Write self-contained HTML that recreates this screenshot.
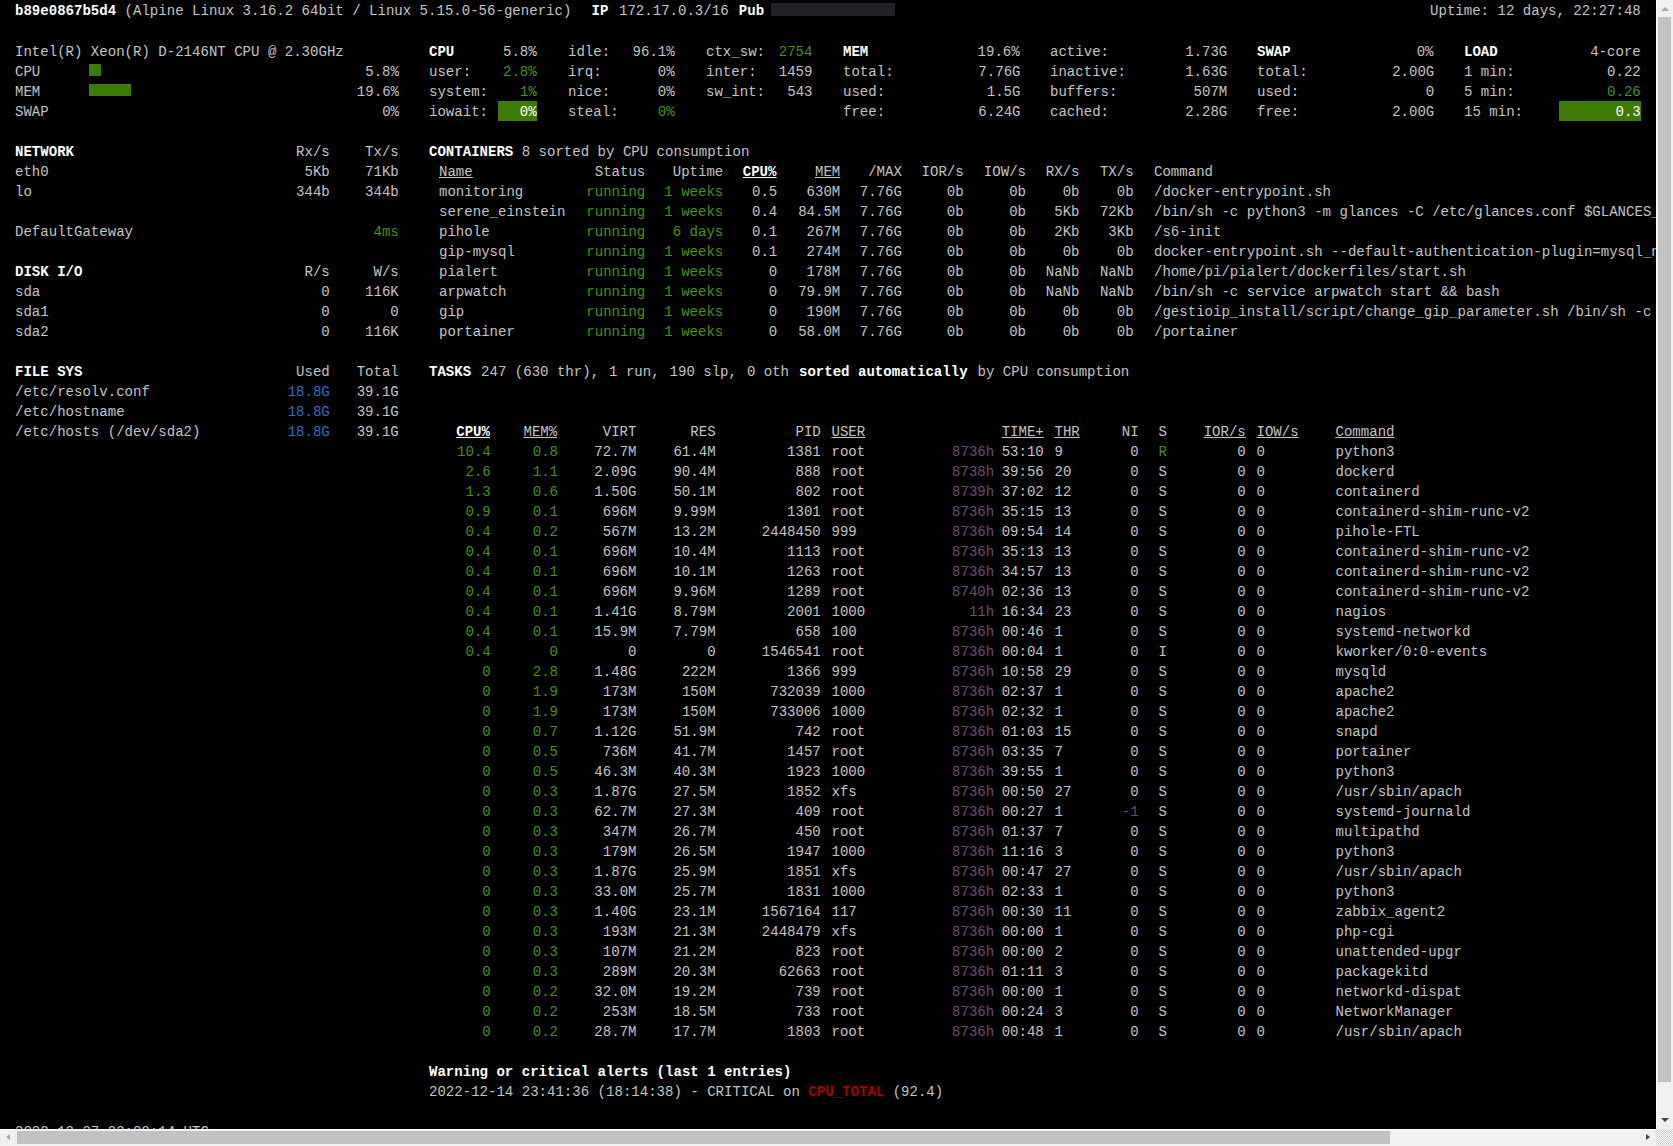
<!DOCTYPE html>
<html><head><meta charset="utf-8"><title>Glances</title>
<style>
html,body{margin:0;padding:0;}
body{width:1673px;height:1146px;overflow:hidden;background:#000;position:relative;}
#scr{position:absolute;left:0;top:0;width:1656px;height:1129px;overflow:hidden;background:#000;}
.t{position:absolute;white-space:pre;font-family:"Liberation Mono",monospace;font-size:14.05px;line-height:20px;color:#c4c4c4;z-index:1;}
.b{position:absolute;z-index:0;}
.ti{font-weight:bold;color:#fff;}
.ok{color:#47900a;}
.okl{color:#fff;}
.car{color:#2b6fc0;}
.hl{color:#6a4c70;}
.crit{color:#A30000;font-weight:bold;}
.u{text-decoration:underline;}
.vs{position:absolute;left:1656px;top:0;width:17px;height:1129px;background:#f0f0f0;border-left:1px solid #fff;box-sizing:border-box;}
.hs{position:absolute;left:0;top:1129px;width:1656px;height:17px;background:#f0f0f0;border-top:1px solid #fff;box-sizing:border-box;}
.corner{position:absolute;left:1656px;top:1129px;width:17px;height:17px;background:repeating-conic-gradient(#fafafa 0 25%, #cfcfcf 0 50%) 0 0/2px 2px;}
.ar{position:absolute;width:0;height:0;}
</style></head><body>
<div id="scr">
<div class="t " style="left:15.00px;top:1.30px"><span class="ti">b89e0867b5d4</span> (Alpine Linux 3.16.2 64bit / Linux 5.15.0-56-generic)</div>
<div class="t ti" style="left:591.50px;top:1.30px">IP</div>
<div class="t " style="left:619.00px;top:1.30px">172.17.0.3/16</div>
<div class="t ti" style="left:738.80px;top:1.30px">Pub</div>
<div class="b" style="left:771px;top:3px;width:124px;height:13px;background:#222226"></div>
<div class="t " style="left:1430.05px;top:1.30px">Uptime: 12 days, 22:27:48</div>
<div class="t " style="left:15.00px;top:42.30px">Intel(R) Xeon(R) D-2146NT CPU @ 2.30GHz</div>
<div class="t " style="left:15.00px;top:62.30px">CPU</div>
<div class="t " style="left:15.00px;top:82.30px">MEM</div>
<div class="t " style="left:15.00px;top:102.30px">SWAP</div>
<div class="b" style="left:89px;top:64px;width:12px;height:12px;background:#3E7B04"></div>
<div class="b" style="left:89px;top:84px;width:42px;height:12px;background:#3E7B04"></div>
<div class="t " style="left:365.28px;top:62.30px">5.8%</div>
<div class="t " style="left:356.85px;top:82.30px">19.6%</div>
<div class="t " style="left:382.14px;top:102.30px">0%</div>
<div class="t ti" style="left:429.00px;top:42.30px">CPU</div>
<div class="t " style="left:502.98px;top:42.30px">5.8%</div>
<div class="t " style="left:429.00px;top:62.30px">user:</div>
<div class="t ok" style="left:502.98px;top:62.30px">2.8%</div>
<div class="t " style="left:429.00px;top:82.30px">system:</div>
<div class="t ok" style="left:519.84px;top:82.30px">1%</div>
<div class="t " style="left:429.00px;top:102.30px">iowait:</div>
<div class="t okl" style="left:519.84px;top:102.30px">0%</div>
<div class="b" style="left:498px;top:101px;width:39px;height:20px;background:#3E7B04"></div>
<div class="t " style="left:568.00px;top:42.30px">idle:</div>
<div class="t " style="left:632.55px;top:42.30px">96.1%</div>
<div class="t " style="left:568.00px;top:62.30px">irq:</div>
<div class="t " style="left:657.84px;top:62.30px">0%</div>
<div class="t " style="left:568.00px;top:82.30px">nice:</div>
<div class="t " style="left:657.84px;top:82.30px">0%</div>
<div class="t " style="left:568.00px;top:102.30px">steal:</div>
<div class="t ok" style="left:657.84px;top:102.30px">0%</div>
<div class="t " style="left:706.00px;top:42.30px">ctx_sw:</div>
<div class="t ok" style="left:778.78px;top:42.30px">2754</div>
<div class="t " style="left:706.00px;top:62.30px">inter:</div>
<div class="t " style="left:778.78px;top:62.30px">1459</div>
<div class="t " style="left:706.00px;top:82.30px">sw_int:</div>
<div class="t " style="left:787.21px;top:82.30px">543</div>
<div class="t ti" style="left:843.00px;top:42.30px">MEM</div>
<div class="t " style="left:977.55px;top:42.30px">19.6%</div>
<div class="t " style="left:843.00px;top:62.30px">total:</div>
<div class="t " style="left:978.35px;top:62.30px">7.76G</div>
<div class="t " style="left:843.00px;top:82.30px">used:</div>
<div class="t " style="left:986.78px;top:82.30px">1.5G</div>
<div class="t " style="left:843.00px;top:102.30px">free:</div>
<div class="t " style="left:978.35px;top:102.30px">6.24G</div>
<div class="t " style="left:1050.00px;top:42.30px">active:</div>
<div class="t " style="left:1185.15px;top:42.30px">1.73G</div>
<div class="t " style="left:1050.00px;top:62.30px">inactive:</div>
<div class="t " style="left:1185.15px;top:62.30px">1.63G</div>
<div class="t " style="left:1050.00px;top:82.30px">buffers:</div>
<div class="t " style="left:1193.58px;top:82.30px">507M</div>
<div class="t " style="left:1050.00px;top:102.30px">cached:</div>
<div class="t " style="left:1185.15px;top:102.30px">2.28G</div>
<div class="t ti" style="left:1257.00px;top:42.30px">SWAP</div>
<div class="t " style="left:1416.64px;top:42.30px">0%</div>
<div class="t " style="left:1257.00px;top:62.30px">total:</div>
<div class="t " style="left:1392.15px;top:62.30px">2.00G</div>
<div class="t " style="left:1257.00px;top:82.30px">used:</div>
<div class="t " style="left:1425.87px;top:82.30px">0</div>
<div class="t " style="left:1257.00px;top:102.30px">free:</div>
<div class="t " style="left:1392.15px;top:102.30px">2.00G</div>
<div class="t ti" style="left:1464.00px;top:42.30px">LOAD</div>
<div class="t " style="left:1590.22px;top:42.30px">4-core</div>
<div class="t " style="left:1464.00px;top:62.30px">1 min:</div>
<div class="t " style="left:1607.08px;top:62.30px">0.22</div>
<div class="t " style="left:1464.00px;top:82.30px">5 min:</div>
<div class="t ok" style="left:1607.08px;top:82.30px">0.26</div>
<div class="t " style="left:1464.00px;top:102.30px">15 min:</div>
<div class="t okl" style="left:1615.51px;top:102.30px">0.3</div>
<div class="b" style="left:1559px;top:101px;width:82px;height:20px;background:#3E7B04"></div>
<div class="t ti" style="left:15.00px;top:142.30px">NETWORK</div>
<div class="t " style="left:296.08px;top:142.30px">Rx/s</div>
<div class="t " style="left:365.08px;top:142.30px">Tx/s</div>
<div class="t " style="left:15.00px;top:162.30px">eth0</div>
<div class="t " style="left:304.51px;top:162.30px">5Kb</div>
<div class="t " style="left:365.08px;top:162.30px">71Kb</div>
<div class="t " style="left:15.00px;top:182.30px">lo</div>
<div class="t " style="left:296.08px;top:182.30px">344b</div>
<div class="t " style="left:365.08px;top:182.30px">344b</div>
<div class="t " style="left:15.00px;top:222.30px">DefaultGateway</div>
<div class="t ok" style="left:373.51px;top:222.30px">4ms</div>
<div class="t ti" style="left:15.00px;top:262.30px">DISK I/O</div>
<div class="t " style="left:304.51px;top:262.30px">R/s</div>
<div class="t " style="left:373.51px;top:262.30px">W/s</div>
<div class="t " style="left:15.00px;top:282.30px">sda</div>
<div class="t " style="left:321.37px;top:282.30px">0</div>
<div class="t " style="left:365.08px;top:282.30px">116K</div>
<div class="t " style="left:15.00px;top:302.30px">sda1</div>
<div class="t " style="left:321.37px;top:302.30px">0</div>
<div class="t " style="left:390.37px;top:302.30px">0</div>
<div class="t " style="left:15.00px;top:322.30px">sda2</div>
<div class="t " style="left:321.37px;top:322.30px">0</div>
<div class="t " style="left:365.08px;top:322.30px">116K</div>
<div class="t ti" style="left:15.00px;top:362.30px">FILE SYS</div>
<div class="t " style="left:296.08px;top:362.30px">Used</div>
<div class="t " style="left:356.65px;top:362.30px">Total</div>
<div class="t " style="left:15.00px;top:382.30px">/etc/resolv.conf</div>
<div class="t car" style="left:287.65px;top:382.30px">18.8G</div>
<div class="t " style="left:356.65px;top:382.30px">39.1G</div>
<div class="t " style="left:15.00px;top:402.30px">/etc/hostname</div>
<div class="t car" style="left:287.65px;top:402.30px">18.8G</div>
<div class="t " style="left:356.65px;top:402.30px">39.1G</div>
<div class="t " style="left:15.00px;top:422.30px">/etc/hosts (/dev/sda2)</div>
<div class="t car" style="left:287.65px;top:422.30px">18.8G</div>
<div class="t " style="left:356.65px;top:422.30px">39.1G</div>
<div class="t " style="left:429.00px;top:142.30px"><span class="ti">CONTAINERS</span> 8 sorted by CPU consumption</div>
<div class="t u" style="left:439.00px;top:162.30px">Name</div>
<div class="t " style="left:594.72px;top:162.30px">Status</div>
<div class="t " style="left:672.72px;top:162.30px">Uptime</div>
<div class="t ti u" style="left:742.78px;top:162.30px">CPU%</div>
<div class="t u" style="left:815.01px;top:162.30px">MEM</div>
<div class="t " style="left:868.18px;top:162.30px">/MAX</div>
<div class="t " style="left:921.55px;top:162.30px">IOR/s</div>
<div class="t " style="left:983.85px;top:162.30px">IOW/s</div>
<div class="t " style="left:1045.78px;top:162.30px">RX/s</div>
<div class="t " style="left:1099.88px;top:162.30px">TX/s</div>
<div class="t " style="left:1154.00px;top:162.30px">Command</div>
<div class="t " style="left:439.00px;top:182.30px">monitoring</div>
<div class="t ok" style="left:586.29px;top:182.30px">running</div>
<div class="t ok" style="left:664.29px;top:182.30px">1 weeks</div>
<div class="t " style="left:752.01px;top:182.30px">0.5</div>
<div class="t " style="left:806.58px;top:182.30px">630M</div>
<div class="t " style="left:859.75px;top:182.30px">7.76G</div>
<div class="t " style="left:946.84px;top:182.30px">0b</div>
<div class="t " style="left:1009.14px;top:182.30px">0b</div>
<div class="t " style="left:1062.64px;top:182.30px">0b</div>
<div class="t " style="left:1116.74px;top:182.30px">0b</div>
<div class="t " style="left:1154.00px;top:182.30px">/docker-entrypoint.sh</div>
<div class="t " style="left:439.00px;top:202.30px">serene_einstein</div>
<div class="t ok" style="left:586.29px;top:202.30px">running</div>
<div class="t ok" style="left:664.29px;top:202.30px">1 weeks</div>
<div class="t " style="left:752.01px;top:202.30px">0.4</div>
<div class="t " style="left:798.15px;top:202.30px">84.5M</div>
<div class="t " style="left:859.75px;top:202.30px">7.76G</div>
<div class="t " style="left:946.84px;top:202.30px">0b</div>
<div class="t " style="left:1009.14px;top:202.30px">0b</div>
<div class="t " style="left:1054.21px;top:202.30px">5Kb</div>
<div class="t " style="left:1099.88px;top:202.30px">72Kb</div>
<div class="t " style="left:1154.00px;top:202.30px">/bin/sh -c python3 -m glances -C /etc/glances.conf $GLANCES_OPT</div>
<div class="t " style="left:439.00px;top:222.30px">pihole</div>
<div class="t ok" style="left:586.29px;top:222.30px">running</div>
<div class="t ok" style="left:672.72px;top:222.30px">6 days</div>
<div class="t " style="left:752.01px;top:222.30px">0.1</div>
<div class="t " style="left:806.58px;top:222.30px">267M</div>
<div class="t " style="left:859.75px;top:222.30px">7.76G</div>
<div class="t " style="left:946.84px;top:222.30px">0b</div>
<div class="t " style="left:1009.14px;top:222.30px">0b</div>
<div class="t " style="left:1054.21px;top:222.30px">2Kb</div>
<div class="t " style="left:1108.31px;top:222.30px">3Kb</div>
<div class="t " style="left:1154.00px;top:222.30px">/s6-init</div>
<div class="t " style="left:439.00px;top:242.30px">gip-mysql</div>
<div class="t ok" style="left:586.29px;top:242.30px">running</div>
<div class="t ok" style="left:664.29px;top:242.30px">1 weeks</div>
<div class="t " style="left:752.01px;top:242.30px">0.1</div>
<div class="t " style="left:806.58px;top:242.30px">274M</div>
<div class="t " style="left:859.75px;top:242.30px">7.76G</div>
<div class="t " style="left:946.84px;top:242.30px">0b</div>
<div class="t " style="left:1009.14px;top:242.30px">0b</div>
<div class="t " style="left:1062.64px;top:242.30px">0b</div>
<div class="t " style="left:1116.74px;top:242.30px">0b</div>
<div class="t " style="left:1154.00px;top:242.30px">docker-entrypoint.sh --default-authentication-plugin=mysql_native_password</div>
<div class="t " style="left:439.00px;top:262.30px">pialert</div>
<div class="t ok" style="left:586.29px;top:262.30px">running</div>
<div class="t ok" style="left:664.29px;top:262.30px">1 weeks</div>
<div class="t " style="left:768.87px;top:262.30px">0</div>
<div class="t " style="left:806.58px;top:262.30px">178M</div>
<div class="t " style="left:859.75px;top:262.30px">7.76G</div>
<div class="t " style="left:946.84px;top:262.30px">0b</div>
<div class="t " style="left:1009.14px;top:262.30px">0b</div>
<div class="t " style="left:1045.78px;top:262.30px">NaNb</div>
<div class="t " style="left:1099.88px;top:262.30px">NaNb</div>
<div class="t " style="left:1154.00px;top:262.30px">/home/pi/pialert/dockerfiles/start.sh</div>
<div class="t " style="left:439.00px;top:282.30px">arpwatch</div>
<div class="t ok" style="left:586.29px;top:282.30px">running</div>
<div class="t ok" style="left:664.29px;top:282.30px">1 weeks</div>
<div class="t " style="left:768.87px;top:282.30px">0</div>
<div class="t " style="left:798.15px;top:282.30px">79.9M</div>
<div class="t " style="left:859.75px;top:282.30px">7.76G</div>
<div class="t " style="left:946.84px;top:282.30px">0b</div>
<div class="t " style="left:1009.14px;top:282.30px">0b</div>
<div class="t " style="left:1045.78px;top:282.30px">NaNb</div>
<div class="t " style="left:1099.88px;top:282.30px">NaNb</div>
<div class="t " style="left:1154.00px;top:282.30px">/bin/sh -c service arpwatch start &amp;&amp; bash</div>
<div class="t " style="left:439.00px;top:302.30px">gip</div>
<div class="t ok" style="left:586.29px;top:302.30px">running</div>
<div class="t ok" style="left:664.29px;top:302.30px">1 weeks</div>
<div class="t " style="left:768.87px;top:302.30px">0</div>
<div class="t " style="left:806.58px;top:302.30px">190M</div>
<div class="t " style="left:859.75px;top:302.30px">7.76G</div>
<div class="t " style="left:946.84px;top:302.30px">0b</div>
<div class="t " style="left:1009.14px;top:302.30px">0b</div>
<div class="t " style="left:1062.64px;top:302.30px">0b</div>
<div class="t " style="left:1116.74px;top:302.30px">0b</div>
<div class="t " style="left:1154.00px;top:302.30px">/gestioip_install/script/change_gip_parameter.sh /bin/sh -c service</div>
<div class="t " style="left:439.00px;top:322.30px">portainer</div>
<div class="t ok" style="left:586.29px;top:322.30px">running</div>
<div class="t ok" style="left:664.29px;top:322.30px">1 weeks</div>
<div class="t " style="left:768.87px;top:322.30px">0</div>
<div class="t " style="left:798.15px;top:322.30px">58.0M</div>
<div class="t " style="left:859.75px;top:322.30px">7.76G</div>
<div class="t " style="left:946.84px;top:322.30px">0b</div>
<div class="t " style="left:1009.14px;top:322.30px">0b</div>
<div class="t " style="left:1062.64px;top:322.30px">0b</div>
<div class="t " style="left:1116.74px;top:322.30px">0b</div>
<div class="t " style="left:1154.00px;top:322.30px">/portainer</div>
<div class="t ti" style="left:429.00px;top:362.30px">TASKS</div>
<div class="t " style="left:472.65px;top:362.30px"> 247 (630 thr),</div>
<div class="t " style="left:600.60px;top:362.30px"> 1 run,</div>
<div class="t " style="left:661.11px;top:362.30px"> 190 slp,</div>
<div class="t " style="left:738.48px;top:362.30px"> 0 oth</div>
<div class="t ti" style="left:790.56px;top:362.30px"> sorted automatically</div>
<div class="t " style="left:969.09px;top:362.30px"> by CPU consumption</div>
<div class="t ti u" style="left:456.28px;top:422.30px">CPU%</div>
<div class="t u" style="left:523.48px;top:422.30px">MEM%</div>
<div class="t " style="left:602.78px;top:422.30px">VIRT</div>
<div class="t " style="left:690.31px;top:422.30px">RES</div>
<div class="t " style="left:795.51px;top:422.30px">PID</div>
<div class="t u" style="left:831.50px;top:422.30px">USER</div>
<div class="t u" style="left:1001.65px;top:422.30px">TIME+</div>
<div class="t u" style="left:1054.50px;top:422.30px">THR</div>
<div class="t " style="left:1121.74px;top:422.30px">NI</div>
<div class="t " style="left:1158.50px;top:422.30px">S</div>
<div class="t u" style="left:1203.65px;top:422.30px">IOR/s</div>
<div class="t u" style="left:1256.50px;top:422.30px">IOW/s</div>
<div class="t u" style="left:1335.50px;top:422.30px">Command</div>
<div class="t ok" style="left:457.08px;top:442.30px">10.4</div>
<div class="t ok" style="left:532.71px;top:442.30px">0.8</div>
<div class="t " style="left:594.35px;top:442.30px">72.7M</div>
<div class="t " style="left:673.45px;top:442.30px">61.4M</div>
<div class="t " style="left:787.08px;top:442.30px">1381</div>
<div class="t " style="left:831.50px;top:442.30px">root</div>
<div class="t " style="left:1001.65px;top:442.30px">53:10</div>
<div class="t hl" style="left:952.07px;top:442.30px">8736h</div>
<div class="t " style="left:1054.50px;top:442.30px">9</div>
<div class="t " style="left:1130.17px;top:442.30px">0</div>
<div class="t ok" style="left:1158.50px;top:442.30px">R</div>
<div class="t " style="left:1237.37px;top:442.30px">0</div>
<div class="t " style="left:1256.50px;top:442.30px">0</div>
<div class="t " style="left:1335.50px;top:442.30px">python3</div>
<div class="t ok" style="left:465.51px;top:462.30px">2.6</div>
<div class="t ok" style="left:532.71px;top:462.30px">1.1</div>
<div class="t " style="left:594.35px;top:462.30px">2.09G</div>
<div class="t " style="left:673.45px;top:462.30px">90.4M</div>
<div class="t " style="left:795.51px;top:462.30px">888</div>
<div class="t " style="left:831.50px;top:462.30px">root</div>
<div class="t " style="left:1001.65px;top:462.30px">39:56</div>
<div class="t hl" style="left:952.07px;top:462.30px">8738h</div>
<div class="t " style="left:1054.50px;top:462.30px">20</div>
<div class="t " style="left:1130.17px;top:462.30px">0</div>
<div class="t " style="left:1158.50px;top:462.30px">S</div>
<div class="t " style="left:1237.37px;top:462.30px">0</div>
<div class="t " style="left:1256.50px;top:462.30px">0</div>
<div class="t " style="left:1335.50px;top:462.30px">dockerd</div>
<div class="t ok" style="left:465.51px;top:482.30px">1.3</div>
<div class="t ok" style="left:532.71px;top:482.30px">0.6</div>
<div class="t " style="left:594.35px;top:482.30px">1.50G</div>
<div class="t " style="left:673.45px;top:482.30px">50.1M</div>
<div class="t " style="left:795.51px;top:482.30px">802</div>
<div class="t " style="left:831.50px;top:482.30px">root</div>
<div class="t " style="left:1001.65px;top:482.30px">37:02</div>
<div class="t hl" style="left:952.07px;top:482.30px">8739h</div>
<div class="t " style="left:1054.50px;top:482.30px">12</div>
<div class="t " style="left:1130.17px;top:482.30px">0</div>
<div class="t " style="left:1158.50px;top:482.30px">S</div>
<div class="t " style="left:1237.37px;top:482.30px">0</div>
<div class="t " style="left:1256.50px;top:482.30px">0</div>
<div class="t " style="left:1335.50px;top:482.30px">containerd</div>
<div class="t ok" style="left:465.51px;top:502.30px">0.9</div>
<div class="t ok" style="left:532.71px;top:502.30px">0.1</div>
<div class="t " style="left:602.78px;top:502.30px">696M</div>
<div class="t " style="left:673.45px;top:502.30px">9.99M</div>
<div class="t " style="left:787.08px;top:502.30px">1301</div>
<div class="t " style="left:831.50px;top:502.30px">root</div>
<div class="t " style="left:1001.65px;top:502.30px">35:15</div>
<div class="t hl" style="left:952.07px;top:502.30px">8736h</div>
<div class="t " style="left:1054.50px;top:502.30px">13</div>
<div class="t " style="left:1130.17px;top:502.30px">0</div>
<div class="t " style="left:1158.50px;top:502.30px">S</div>
<div class="t " style="left:1237.37px;top:502.30px">0</div>
<div class="t " style="left:1256.50px;top:502.30px">0</div>
<div class="t " style="left:1335.50px;top:502.30px">containerd-shim-runc-v2</div>
<div class="t ok" style="left:465.51px;top:522.30px">0.4</div>
<div class="t ok" style="left:532.71px;top:522.30px">0.2</div>
<div class="t " style="left:602.78px;top:522.30px">567M</div>
<div class="t " style="left:673.45px;top:522.30px">13.2M</div>
<div class="t " style="left:761.79px;top:522.30px">2448450</div>
<div class="t " style="left:831.50px;top:522.30px">999</div>
<div class="t " style="left:1001.65px;top:522.30px">09:54</div>
<div class="t hl" style="left:952.07px;top:522.30px">8736h</div>
<div class="t " style="left:1054.50px;top:522.30px">14</div>
<div class="t " style="left:1130.17px;top:522.30px">0</div>
<div class="t " style="left:1158.50px;top:522.30px">S</div>
<div class="t " style="left:1237.37px;top:522.30px">0</div>
<div class="t " style="left:1256.50px;top:522.30px">0</div>
<div class="t " style="left:1335.50px;top:522.30px">pihole-FTL</div>
<div class="t ok" style="left:465.51px;top:542.30px">0.4</div>
<div class="t ok" style="left:532.71px;top:542.30px">0.1</div>
<div class="t " style="left:602.78px;top:542.30px">696M</div>
<div class="t " style="left:673.45px;top:542.30px">10.4M</div>
<div class="t " style="left:787.08px;top:542.30px">1113</div>
<div class="t " style="left:831.50px;top:542.30px">root</div>
<div class="t " style="left:1001.65px;top:542.30px">35:13</div>
<div class="t hl" style="left:952.07px;top:542.30px">8736h</div>
<div class="t " style="left:1054.50px;top:542.30px">13</div>
<div class="t " style="left:1130.17px;top:542.30px">0</div>
<div class="t " style="left:1158.50px;top:542.30px">S</div>
<div class="t " style="left:1237.37px;top:542.30px">0</div>
<div class="t " style="left:1256.50px;top:542.30px">0</div>
<div class="t " style="left:1335.50px;top:542.30px">containerd-shim-runc-v2</div>
<div class="t ok" style="left:465.51px;top:562.30px">0.4</div>
<div class="t ok" style="left:532.71px;top:562.30px">0.1</div>
<div class="t " style="left:602.78px;top:562.30px">696M</div>
<div class="t " style="left:673.45px;top:562.30px">10.1M</div>
<div class="t " style="left:787.08px;top:562.30px">1263</div>
<div class="t " style="left:831.50px;top:562.30px">root</div>
<div class="t " style="left:1001.65px;top:562.30px">34:57</div>
<div class="t hl" style="left:952.07px;top:562.30px">8736h</div>
<div class="t " style="left:1054.50px;top:562.30px">13</div>
<div class="t " style="left:1130.17px;top:562.30px">0</div>
<div class="t " style="left:1158.50px;top:562.30px">S</div>
<div class="t " style="left:1237.37px;top:562.30px">0</div>
<div class="t " style="left:1256.50px;top:562.30px">0</div>
<div class="t " style="left:1335.50px;top:562.30px">containerd-shim-runc-v2</div>
<div class="t ok" style="left:465.51px;top:582.30px">0.4</div>
<div class="t ok" style="left:532.71px;top:582.30px">0.1</div>
<div class="t " style="left:602.78px;top:582.30px">696M</div>
<div class="t " style="left:673.45px;top:582.30px">9.96M</div>
<div class="t " style="left:787.08px;top:582.30px">1289</div>
<div class="t " style="left:831.50px;top:582.30px">root</div>
<div class="t " style="left:1001.65px;top:582.30px">02:36</div>
<div class="t hl" style="left:952.07px;top:582.30px">8740h</div>
<div class="t " style="left:1054.50px;top:582.30px">13</div>
<div class="t " style="left:1130.17px;top:582.30px">0</div>
<div class="t " style="left:1158.50px;top:582.30px">S</div>
<div class="t " style="left:1237.37px;top:582.30px">0</div>
<div class="t " style="left:1256.50px;top:582.30px">0</div>
<div class="t " style="left:1335.50px;top:582.30px">containerd-shim-runc-v2</div>
<div class="t ok" style="left:465.51px;top:602.30px">0.4</div>
<div class="t ok" style="left:532.71px;top:602.30px">0.1</div>
<div class="t " style="left:594.35px;top:602.30px">1.41G</div>
<div class="t " style="left:673.45px;top:602.30px">8.79M</div>
<div class="t " style="left:787.08px;top:602.30px">2001</div>
<div class="t " style="left:831.50px;top:602.30px">1000</div>
<div class="t " style="left:1001.65px;top:602.30px">16:34</div>
<div class="t hl" style="left:968.93px;top:602.30px">11h</div>
<div class="t " style="left:1054.50px;top:602.30px">23</div>
<div class="t " style="left:1130.17px;top:602.30px">0</div>
<div class="t " style="left:1158.50px;top:602.30px">S</div>
<div class="t " style="left:1237.37px;top:602.30px">0</div>
<div class="t " style="left:1256.50px;top:602.30px">0</div>
<div class="t " style="left:1335.50px;top:602.30px">nagios</div>
<div class="t ok" style="left:465.51px;top:622.30px">0.4</div>
<div class="t ok" style="left:532.71px;top:622.30px">0.1</div>
<div class="t " style="left:594.35px;top:622.30px">15.9M</div>
<div class="t " style="left:673.45px;top:622.30px">7.79M</div>
<div class="t " style="left:795.51px;top:622.30px">658</div>
<div class="t " style="left:831.50px;top:622.30px">100</div>
<div class="t " style="left:1001.65px;top:622.30px">00:46</div>
<div class="t hl" style="left:952.07px;top:622.30px">8736h</div>
<div class="t " style="left:1054.50px;top:622.30px">1</div>
<div class="t " style="left:1130.17px;top:622.30px">0</div>
<div class="t " style="left:1158.50px;top:622.30px">S</div>
<div class="t " style="left:1237.37px;top:622.30px">0</div>
<div class="t " style="left:1256.50px;top:622.30px">0</div>
<div class="t " style="left:1335.50px;top:622.30px">systemd-networkd</div>
<div class="t ok" style="left:465.51px;top:642.30px">0.4</div>
<div class="t ok" style="left:549.57px;top:642.30px">0</div>
<div class="t " style="left:628.07px;top:642.30px">0</div>
<div class="t " style="left:707.17px;top:642.30px">0</div>
<div class="t " style="left:761.79px;top:642.30px">1546541</div>
<div class="t " style="left:831.50px;top:642.30px">root</div>
<div class="t " style="left:1001.65px;top:642.30px">00:04</div>
<div class="t hl" style="left:952.07px;top:642.30px">8736h</div>
<div class="t " style="left:1054.50px;top:642.30px">1</div>
<div class="t " style="left:1130.17px;top:642.30px">0</div>
<div class="t " style="left:1158.50px;top:642.30px">I</div>
<div class="t " style="left:1237.37px;top:642.30px">0</div>
<div class="t " style="left:1256.50px;top:642.30px">0</div>
<div class="t " style="left:1335.50px;top:642.30px">kworker/0:0-events</div>
<div class="t ok" style="left:482.37px;top:662.30px">0</div>
<div class="t ok" style="left:532.71px;top:662.30px">2.8</div>
<div class="t " style="left:594.35px;top:662.30px">1.48G</div>
<div class="t " style="left:681.88px;top:662.30px">222M</div>
<div class="t " style="left:787.08px;top:662.30px">1366</div>
<div class="t " style="left:831.50px;top:662.30px">999</div>
<div class="t " style="left:1001.65px;top:662.30px">10:58</div>
<div class="t hl" style="left:952.07px;top:662.30px">8736h</div>
<div class="t " style="left:1054.50px;top:662.30px">29</div>
<div class="t " style="left:1130.17px;top:662.30px">0</div>
<div class="t " style="left:1158.50px;top:662.30px">S</div>
<div class="t " style="left:1237.37px;top:662.30px">0</div>
<div class="t " style="left:1256.50px;top:662.30px">0</div>
<div class="t " style="left:1335.50px;top:662.30px">mysqld</div>
<div class="t ok" style="left:482.37px;top:682.30px">0</div>
<div class="t ok" style="left:532.71px;top:682.30px">1.9</div>
<div class="t " style="left:602.78px;top:682.30px">173M</div>
<div class="t " style="left:681.88px;top:682.30px">150M</div>
<div class="t " style="left:770.22px;top:682.30px">732039</div>
<div class="t " style="left:831.50px;top:682.30px">1000</div>
<div class="t " style="left:1001.65px;top:682.30px">02:37</div>
<div class="t hl" style="left:952.07px;top:682.30px">8736h</div>
<div class="t " style="left:1054.50px;top:682.30px">1</div>
<div class="t " style="left:1130.17px;top:682.30px">0</div>
<div class="t " style="left:1158.50px;top:682.30px">S</div>
<div class="t " style="left:1237.37px;top:682.30px">0</div>
<div class="t " style="left:1256.50px;top:682.30px">0</div>
<div class="t " style="left:1335.50px;top:682.30px">apache2</div>
<div class="t ok" style="left:482.37px;top:702.30px">0</div>
<div class="t ok" style="left:532.71px;top:702.30px">1.9</div>
<div class="t " style="left:602.78px;top:702.30px">173M</div>
<div class="t " style="left:681.88px;top:702.30px">150M</div>
<div class="t " style="left:770.22px;top:702.30px">733006</div>
<div class="t " style="left:831.50px;top:702.30px">1000</div>
<div class="t " style="left:1001.65px;top:702.30px">02:32</div>
<div class="t hl" style="left:952.07px;top:702.30px">8736h</div>
<div class="t " style="left:1054.50px;top:702.30px">1</div>
<div class="t " style="left:1130.17px;top:702.30px">0</div>
<div class="t " style="left:1158.50px;top:702.30px">S</div>
<div class="t " style="left:1237.37px;top:702.30px">0</div>
<div class="t " style="left:1256.50px;top:702.30px">0</div>
<div class="t " style="left:1335.50px;top:702.30px">apache2</div>
<div class="t ok" style="left:482.37px;top:722.30px">0</div>
<div class="t ok" style="left:532.71px;top:722.30px">0.7</div>
<div class="t " style="left:594.35px;top:722.30px">1.12G</div>
<div class="t " style="left:673.45px;top:722.30px">51.9M</div>
<div class="t " style="left:795.51px;top:722.30px">742</div>
<div class="t " style="left:831.50px;top:722.30px">root</div>
<div class="t " style="left:1001.65px;top:722.30px">01:03</div>
<div class="t hl" style="left:952.07px;top:722.30px">8736h</div>
<div class="t " style="left:1054.50px;top:722.30px">15</div>
<div class="t " style="left:1130.17px;top:722.30px">0</div>
<div class="t " style="left:1158.50px;top:722.30px">S</div>
<div class="t " style="left:1237.37px;top:722.30px">0</div>
<div class="t " style="left:1256.50px;top:722.30px">0</div>
<div class="t " style="left:1335.50px;top:722.30px">snapd</div>
<div class="t ok" style="left:482.37px;top:742.30px">0</div>
<div class="t ok" style="left:532.71px;top:742.30px">0.5</div>
<div class="t " style="left:602.78px;top:742.30px">736M</div>
<div class="t " style="left:673.45px;top:742.30px">41.7M</div>
<div class="t " style="left:787.08px;top:742.30px">1457</div>
<div class="t " style="left:831.50px;top:742.30px">root</div>
<div class="t " style="left:1001.65px;top:742.30px">03:35</div>
<div class="t hl" style="left:952.07px;top:742.30px">8736h</div>
<div class="t " style="left:1054.50px;top:742.30px">7</div>
<div class="t " style="left:1130.17px;top:742.30px">0</div>
<div class="t " style="left:1158.50px;top:742.30px">S</div>
<div class="t " style="left:1237.37px;top:742.30px">0</div>
<div class="t " style="left:1256.50px;top:742.30px">0</div>
<div class="t " style="left:1335.50px;top:742.30px">portainer</div>
<div class="t ok" style="left:482.37px;top:762.30px">0</div>
<div class="t ok" style="left:532.71px;top:762.30px">0.5</div>
<div class="t " style="left:594.35px;top:762.30px">46.3M</div>
<div class="t " style="left:673.45px;top:762.30px">40.3M</div>
<div class="t " style="left:787.08px;top:762.30px">1923</div>
<div class="t " style="left:831.50px;top:762.30px">1000</div>
<div class="t " style="left:1001.65px;top:762.30px">39:55</div>
<div class="t hl" style="left:952.07px;top:762.30px">8736h</div>
<div class="t " style="left:1054.50px;top:762.30px">1</div>
<div class="t " style="left:1130.17px;top:762.30px">0</div>
<div class="t " style="left:1158.50px;top:762.30px">S</div>
<div class="t " style="left:1237.37px;top:762.30px">0</div>
<div class="t " style="left:1256.50px;top:762.30px">0</div>
<div class="t " style="left:1335.50px;top:762.30px">python3</div>
<div class="t ok" style="left:482.37px;top:782.30px">0</div>
<div class="t ok" style="left:532.71px;top:782.30px">0.3</div>
<div class="t " style="left:594.35px;top:782.30px">1.87G</div>
<div class="t " style="left:673.45px;top:782.30px">27.5M</div>
<div class="t " style="left:787.08px;top:782.30px">1852</div>
<div class="t " style="left:831.50px;top:782.30px">xfs</div>
<div class="t " style="left:1001.65px;top:782.30px">00:50</div>
<div class="t hl" style="left:952.07px;top:782.30px">8736h</div>
<div class="t " style="left:1054.50px;top:782.30px">27</div>
<div class="t " style="left:1130.17px;top:782.30px">0</div>
<div class="t " style="left:1158.50px;top:782.30px">S</div>
<div class="t " style="left:1237.37px;top:782.30px">0</div>
<div class="t " style="left:1256.50px;top:782.30px">0</div>
<div class="t " style="left:1335.50px;top:782.30px">/usr/sbin/apach</div>
<div class="t ok" style="left:482.37px;top:802.30px">0</div>
<div class="t ok" style="left:532.71px;top:802.30px">0.3</div>
<div class="t " style="left:594.35px;top:802.30px">62.7M</div>
<div class="t " style="left:673.45px;top:802.30px">27.3M</div>
<div class="t " style="left:795.51px;top:802.30px">409</div>
<div class="t " style="left:831.50px;top:802.30px">root</div>
<div class="t " style="left:1001.65px;top:802.30px">00:27</div>
<div class="t hl" style="left:952.07px;top:802.30px">8736h</div>
<div class="t " style="left:1054.50px;top:802.30px">1</div>
<div class="t hl" style="left:1121.74px;top:802.30px">-1</div>
<div class="t " style="left:1158.50px;top:802.30px">S</div>
<div class="t " style="left:1237.37px;top:802.30px">0</div>
<div class="t " style="left:1256.50px;top:802.30px">0</div>
<div class="t " style="left:1335.50px;top:802.30px">systemd-journald</div>
<div class="t ok" style="left:482.37px;top:822.30px">0</div>
<div class="t ok" style="left:532.71px;top:822.30px">0.3</div>
<div class="t " style="left:602.78px;top:822.30px">347M</div>
<div class="t " style="left:673.45px;top:822.30px">26.7M</div>
<div class="t " style="left:795.51px;top:822.30px">450</div>
<div class="t " style="left:831.50px;top:822.30px">root</div>
<div class="t " style="left:1001.65px;top:822.30px">01:37</div>
<div class="t hl" style="left:952.07px;top:822.30px">8736h</div>
<div class="t " style="left:1054.50px;top:822.30px">7</div>
<div class="t " style="left:1130.17px;top:822.30px">0</div>
<div class="t " style="left:1158.50px;top:822.30px">S</div>
<div class="t " style="left:1237.37px;top:822.30px">0</div>
<div class="t " style="left:1256.50px;top:822.30px">0</div>
<div class="t " style="left:1335.50px;top:822.30px">multipathd</div>
<div class="t ok" style="left:482.37px;top:842.30px">0</div>
<div class="t ok" style="left:532.71px;top:842.30px">0.3</div>
<div class="t " style="left:602.78px;top:842.30px">179M</div>
<div class="t " style="left:673.45px;top:842.30px">26.5M</div>
<div class="t " style="left:787.08px;top:842.30px">1947</div>
<div class="t " style="left:831.50px;top:842.30px">1000</div>
<div class="t " style="left:1001.65px;top:842.30px">11:16</div>
<div class="t hl" style="left:952.07px;top:842.30px">8736h</div>
<div class="t " style="left:1054.50px;top:842.30px">3</div>
<div class="t " style="left:1130.17px;top:842.30px">0</div>
<div class="t " style="left:1158.50px;top:842.30px">S</div>
<div class="t " style="left:1237.37px;top:842.30px">0</div>
<div class="t " style="left:1256.50px;top:842.30px">0</div>
<div class="t " style="left:1335.50px;top:842.30px">python3</div>
<div class="t ok" style="left:482.37px;top:862.30px">0</div>
<div class="t ok" style="left:532.71px;top:862.30px">0.3</div>
<div class="t " style="left:594.35px;top:862.30px">1.87G</div>
<div class="t " style="left:673.45px;top:862.30px">25.9M</div>
<div class="t " style="left:787.08px;top:862.30px">1851</div>
<div class="t " style="left:831.50px;top:862.30px">xfs</div>
<div class="t " style="left:1001.65px;top:862.30px">00:47</div>
<div class="t hl" style="left:952.07px;top:862.30px">8736h</div>
<div class="t " style="left:1054.50px;top:862.30px">27</div>
<div class="t " style="left:1130.17px;top:862.30px">0</div>
<div class="t " style="left:1158.50px;top:862.30px">S</div>
<div class="t " style="left:1237.37px;top:862.30px">0</div>
<div class="t " style="left:1256.50px;top:862.30px">0</div>
<div class="t " style="left:1335.50px;top:862.30px">/usr/sbin/apach</div>
<div class="t ok" style="left:482.37px;top:882.30px">0</div>
<div class="t ok" style="left:532.71px;top:882.30px">0.3</div>
<div class="t " style="left:594.35px;top:882.30px">33.0M</div>
<div class="t " style="left:673.45px;top:882.30px">25.7M</div>
<div class="t " style="left:787.08px;top:882.30px">1831</div>
<div class="t " style="left:831.50px;top:882.30px">1000</div>
<div class="t " style="left:1001.65px;top:882.30px">02:33</div>
<div class="t hl" style="left:952.07px;top:882.30px">8736h</div>
<div class="t " style="left:1054.50px;top:882.30px">1</div>
<div class="t " style="left:1130.17px;top:882.30px">0</div>
<div class="t " style="left:1158.50px;top:882.30px">S</div>
<div class="t " style="left:1237.37px;top:882.30px">0</div>
<div class="t " style="left:1256.50px;top:882.30px">0</div>
<div class="t " style="left:1335.50px;top:882.30px">python3</div>
<div class="t ok" style="left:482.37px;top:902.30px">0</div>
<div class="t ok" style="left:532.71px;top:902.30px">0.3</div>
<div class="t " style="left:594.35px;top:902.30px">1.40G</div>
<div class="t " style="left:673.45px;top:902.30px">23.1M</div>
<div class="t " style="left:761.79px;top:902.30px">1567164</div>
<div class="t " style="left:831.50px;top:902.30px">117</div>
<div class="t " style="left:1001.65px;top:902.30px">00:30</div>
<div class="t hl" style="left:952.07px;top:902.30px">8736h</div>
<div class="t " style="left:1054.50px;top:902.30px">11</div>
<div class="t " style="left:1130.17px;top:902.30px">0</div>
<div class="t " style="left:1158.50px;top:902.30px">S</div>
<div class="t " style="left:1237.37px;top:902.30px">0</div>
<div class="t " style="left:1256.50px;top:902.30px">0</div>
<div class="t " style="left:1335.50px;top:902.30px">zabbix_agent2</div>
<div class="t ok" style="left:482.37px;top:922.30px">0</div>
<div class="t ok" style="left:532.71px;top:922.30px">0.3</div>
<div class="t " style="left:602.78px;top:922.30px">193M</div>
<div class="t " style="left:673.45px;top:922.30px">21.3M</div>
<div class="t " style="left:761.79px;top:922.30px">2448479</div>
<div class="t " style="left:831.50px;top:922.30px">xfs</div>
<div class="t " style="left:1001.65px;top:922.30px">00:00</div>
<div class="t hl" style="left:952.07px;top:922.30px">8736h</div>
<div class="t " style="left:1054.50px;top:922.30px">1</div>
<div class="t " style="left:1130.17px;top:922.30px">0</div>
<div class="t " style="left:1158.50px;top:922.30px">S</div>
<div class="t " style="left:1237.37px;top:922.30px">0</div>
<div class="t " style="left:1256.50px;top:922.30px">0</div>
<div class="t " style="left:1335.50px;top:922.30px">php-cgi</div>
<div class="t ok" style="left:482.37px;top:942.30px">0</div>
<div class="t ok" style="left:532.71px;top:942.30px">0.3</div>
<div class="t " style="left:602.78px;top:942.30px">107M</div>
<div class="t " style="left:673.45px;top:942.30px">21.2M</div>
<div class="t " style="left:795.51px;top:942.30px">823</div>
<div class="t " style="left:831.50px;top:942.30px">root</div>
<div class="t " style="left:1001.65px;top:942.30px">00:00</div>
<div class="t hl" style="left:952.07px;top:942.30px">8736h</div>
<div class="t " style="left:1054.50px;top:942.30px">2</div>
<div class="t " style="left:1130.17px;top:942.30px">0</div>
<div class="t " style="left:1158.50px;top:942.30px">S</div>
<div class="t " style="left:1237.37px;top:942.30px">0</div>
<div class="t " style="left:1256.50px;top:942.30px">0</div>
<div class="t " style="left:1335.50px;top:942.30px">unattended-upgr</div>
<div class="t ok" style="left:482.37px;top:962.30px">0</div>
<div class="t ok" style="left:532.71px;top:962.30px">0.3</div>
<div class="t " style="left:602.78px;top:962.30px">289M</div>
<div class="t " style="left:673.45px;top:962.30px">20.3M</div>
<div class="t " style="left:778.65px;top:962.30px">62663</div>
<div class="t " style="left:831.50px;top:962.30px">root</div>
<div class="t " style="left:1001.65px;top:962.30px">01:11</div>
<div class="t hl" style="left:952.07px;top:962.30px">8736h</div>
<div class="t " style="left:1054.50px;top:962.30px">3</div>
<div class="t " style="left:1130.17px;top:962.30px">0</div>
<div class="t " style="left:1158.50px;top:962.30px">S</div>
<div class="t " style="left:1237.37px;top:962.30px">0</div>
<div class="t " style="left:1256.50px;top:962.30px">0</div>
<div class="t " style="left:1335.50px;top:962.30px">packagekitd</div>
<div class="t ok" style="left:482.37px;top:982.30px">0</div>
<div class="t ok" style="left:532.71px;top:982.30px">0.2</div>
<div class="t " style="left:594.35px;top:982.30px">32.0M</div>
<div class="t " style="left:673.45px;top:982.30px">19.2M</div>
<div class="t " style="left:795.51px;top:982.30px">739</div>
<div class="t " style="left:831.50px;top:982.30px">root</div>
<div class="t " style="left:1001.65px;top:982.30px">00:00</div>
<div class="t hl" style="left:952.07px;top:982.30px">8736h</div>
<div class="t " style="left:1054.50px;top:982.30px">1</div>
<div class="t " style="left:1130.17px;top:982.30px">0</div>
<div class="t " style="left:1158.50px;top:982.30px">S</div>
<div class="t " style="left:1237.37px;top:982.30px">0</div>
<div class="t " style="left:1256.50px;top:982.30px">0</div>
<div class="t " style="left:1335.50px;top:982.30px">networkd-dispat</div>
<div class="t ok" style="left:482.37px;top:1002.30px">0</div>
<div class="t ok" style="left:532.71px;top:1002.30px">0.2</div>
<div class="t " style="left:602.78px;top:1002.30px">253M</div>
<div class="t " style="left:673.45px;top:1002.30px">18.5M</div>
<div class="t " style="left:795.51px;top:1002.30px">733</div>
<div class="t " style="left:831.50px;top:1002.30px">root</div>
<div class="t " style="left:1001.65px;top:1002.30px">00:24</div>
<div class="t hl" style="left:952.07px;top:1002.30px">8736h</div>
<div class="t " style="left:1054.50px;top:1002.30px">3</div>
<div class="t " style="left:1130.17px;top:1002.30px">0</div>
<div class="t " style="left:1158.50px;top:1002.30px">S</div>
<div class="t " style="left:1237.37px;top:1002.30px">0</div>
<div class="t " style="left:1256.50px;top:1002.30px">0</div>
<div class="t " style="left:1335.50px;top:1002.30px">NetworkManager</div>
<div class="t ok" style="left:482.37px;top:1022.30px">0</div>
<div class="t ok" style="left:532.71px;top:1022.30px">0.2</div>
<div class="t " style="left:594.35px;top:1022.30px">28.7M</div>
<div class="t " style="left:673.45px;top:1022.30px">17.7M</div>
<div class="t " style="left:787.08px;top:1022.30px">1803</div>
<div class="t " style="left:831.50px;top:1022.30px">root</div>
<div class="t " style="left:1001.65px;top:1022.30px">00:48</div>
<div class="t hl" style="left:952.07px;top:1022.30px">8736h</div>
<div class="t " style="left:1054.50px;top:1022.30px">1</div>
<div class="t " style="left:1130.17px;top:1022.30px">0</div>
<div class="t " style="left:1158.50px;top:1022.30px">S</div>
<div class="t " style="left:1237.37px;top:1022.30px">0</div>
<div class="t " style="left:1256.50px;top:1022.30px">0</div>
<div class="t " style="left:1335.50px;top:1022.30px">/usr/sbin/apach</div>
<div class="t ti" style="left:429.00px;top:1062.30px">Warning or critical alerts (last 1 entries)</div>
<div class="t " style="left:429.00px;top:1082.30px">2022-12-14 23:41:36 (18:14:38) - CRITICAL on <span class="crit">CPU_TOTAL</span> (92.4)</div>
<div class="t " style="left:15.00px;top:1122.30px">2022-12-27 22:09:14 UTC</div>
</div>
<div class="vs"></div>
<div style="position:absolute;left:1658px;top:17px;width:13px;height:1065px;background:#c2c2c2"></div>
<div class="hs"></div>
<div style="position:absolute;left:17px;top:1131px;width:1373px;height:13px;background:#c2c2c2"></div>
<div class="corner"></div>
<div class="ar" style="left:1661px;top:7px;border-left:4px solid transparent;border-right:4px solid transparent;border-bottom:4px solid #a3ada6;"></div>
<div class="ar" style="left:1661px;top:1118px;border-left:4px solid transparent;border-right:4px solid transparent;border-top:4px solid #4a4250;"></div>
<div class="ar" style="left:6px;top:1134px;border-top:3.5px solid transparent;border-bottom:3.5px solid transparent;border-right:4px solid #a3ada6;"></div>
<div class="ar" style="left:1646px;top:1134px;border-top:3.5px solid transparent;border-bottom:3.5px solid transparent;border-left:4px solid #4a4250;"></div>
</body></html>
